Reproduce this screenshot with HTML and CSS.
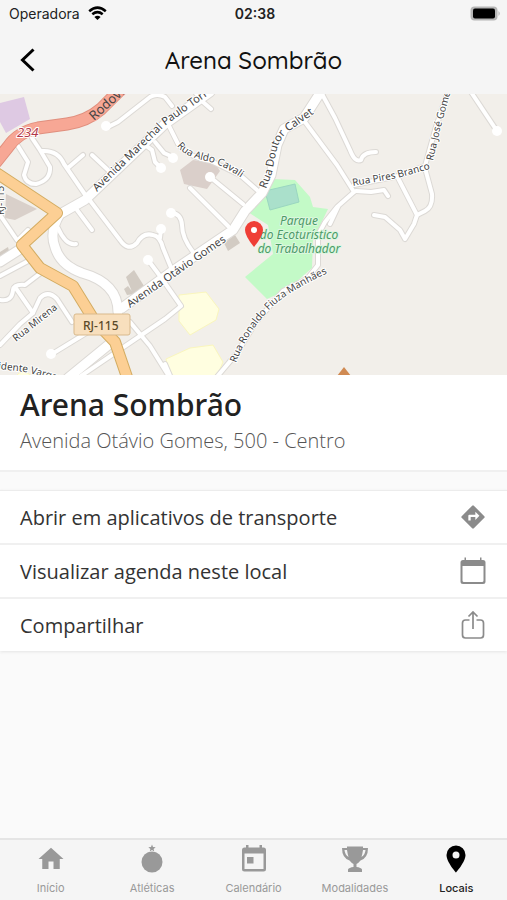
FILE: index.html
```
<!DOCTYPE html>
<html lang="pt-BR">
  <head>
    <meta charset="utf-8">
    <meta name="viewport" content="width=device-width, initial-scale=1">
    <title>Arena Sombrão</title>
    <link rel="stylesheet" href="styles.css">
  </head>
  <body>
    <div class="status">
      <div class="carrier">
        <span>Operadora</span>
        <svg width="19" height="15" viewBox="0 0 19 15" fill="none" stroke="#000" stroke-width="2.5">
          <path d="M1.2 5.2Q9.500-2 17.800 5.200M4.300 8.300Q9.500 4 14.700 8.300"/>
          <path d="M9.500 14L6.400 10.900Q9.500 8.400 12.600 10.900Z" fill="#000" stroke="none"/>
        </svg>
      </div>
      <time class="clock">02:38</time>
      <svg class="battery" width="31" height="15" viewBox="0 0 31 15">
        <rect x="0.500" y="0.500" width="27" height="14" rx="4" fill="#b5b5b5"/>
        <path d="M28.500 5Q31 7.500 28.500 10Z" fill="#b5b5b5"/>
        <rect x="3" y="2.500" width="22" height="10" rx="2" fill="#000"/>
      </svg>
    </div>

    <header class="header">
      <button class="back" aria-label="Voltar">
        <svg width="16" height="24" viewBox="0 0 16 24" fill="none" stroke="#000" stroke-width="3"><path d="M13.500 1.500L2.500 12L13.500 22.500"/></svg>
      </button>
      <h1 class="header_title">Arena Sombrão</h1>
    </header>

    <main class="content">
      <svg class="map" viewBox="0 94 507 281" role="img" aria-label="Mapa do local">
        <defs>
          <g id="small_roads">
            <path d="M108 127L118 122L150 97Q157 93 165 97L172 106M195 92L203 102L211 109"/>
            <path d="M18 146L28 162L24 175Q26 184 36 184Q51 180 50 167L40 150L32 138"/>
            <path d="M42 151Q58 150 64 164L86 196M69 167L83 155M92 155L108 170"/>
            <path d="M145 145L152 150L155 162L161 168M155 142L164 153L173 157"/>
            <path d="M168 124L178 144Q190 158 211 161L240 175L257 190M210 177L243 204M190 188L228 226"/>
            <path d="M88 198L120 240Q128 252 137 243Q143 232 153 235Q160 236 163 248L172 270M161 229L160 238"/>
            <path d="M171 213Q181 213 182 225Q182 238 193 252M77 210L92 230M58 228Q66 246 76 244"/>
            <path d="M148 260L160 276L181 306L165 319L78 378M130 322L150 346L170 378M52 354L88 332"/>
            <path d="M0 276L30 260M0 300Q12 302 13 290Q14 284 25 285L42 272M15 287L33 313"/>
            <path d="M0 345L20 324L33 313L40 298Q48 290 57 299L72 322M0 215L17 240M18 240L28 230"/>
            <path d="M322 94L335 118L350 150Q355 163 361 160Q363 152 376 152"/>
            <path d="M305 122L337 165L354 192"/>
            <path d="M356 191L371 192L384 190L388 196M354 185L398 176L425 166L435 130L447 94"/>
            <path d="M398 178L417 215L414 224L405 239L400 230L385 217L374 215"/>
            <path d="M425 168L432 194Q433 207 425 211L417 215M471 92L497 131"/>
            <path d="M354 192L337 207L325 222L318 235L318 265L307 279L283 291L256 322L237 353L216 378M338 207L330 224"/>
            <path d="M165 364L171 378"/>
          </g>
          <g id="big_roads">
            <path d="M62 213L85 200L165 124L210 92"/>
            <path d="M60 214Q49 232 55 247Q60 265 82 273Q118 283 118 312"/>
            <path d="M322 90L304 118L284 129L277 145L271 175L262 193L245 211L233 230L174 270L122 308M112 342L68 378"/>
            <path d="M0 262L22 248"/>
          </g>
          <path id="orange_road" d="M-2 174L57 213L22 245L40 268L73 286L94 320L115 342L128 380"/>
          <path id="red_road" d="M124 86L101 109Q87 121 67 124L38 128Q18 132 8 147L-4 162"/>
          <path id="t_rodovia" d="M94 121L154 67"/>
          <path id="t_marechal" d="M97 192L166 125L214 91L254 66"/>
          <path id="t_aldo" d="M177 146Q185 157 207 161Q225 165 252 186"/>
          <path id="t_calvet" d="M266 189L272 173L276 153Q279 138 289 131L322 108"/>
          <path id="t_otavio" d="M130 308L238 233"/>
          <path id="t_pires" d="M353 186L398 178L440 166"/>
          <path id="t_jose" d="M433 161L440 130L458 65"/>
          <path id="t_mirena" d="M16 342L66 302"/>
          <path id="t_ronaldo" d="M236 363Q247 332 273 306Q291 290 330 272"/>
          <path id="t_presidente" d="M-2 369L25 372L70 384"/>
        </defs>
        <rect y="94" width="507" height="281" fill="#f2efea"/>

        <path d="M0 103L24 97L30 119L6 133L0 122Z" fill="#dec9e3"/>
        <path d="M6 194L37 209L15 220L5 218Z" fill="#d9d0ca"/>
        <path d="M179 295L206 292L219 309L216 320L190 335L179 321ZM166 359L190 348L213 345L223 362L217 376L170 376ZM16 376Q22 368 32 376Z" fill="#fffee0" stroke="#faf6bd"/>
        <path d="M180 170L193 160L215 163L220 171L207 189L184 184Z" fill="#dacfca"/>
        <path d="M126 277L134 270L144 286L133 294ZM124 289L128 286L134 294L127 295ZM224 243L235 235L240 243L228 251ZM0 252L8 247L9 251L0 258Z" fill="#d2cbc3"/>
        <path d="M273 179L295 180L310 197L313 207L328 209L313 240L312 268L287 290L267 299L245 277L273 254L268 225L248 212L266 190Z" fill="#c3fac7"/>
        <path d="M265 191L295 184L299 202L270 210Z" fill="#aae0cb" stroke="#9ad6c0"/>

        <use href="#small_roads" class="casing small_case"/>
        <use href="#big_roads" class="casing big_case"/>
        <use href="#small_roads" class="road small_fill"/>
        <use href="#big_roads" class="road big_fill"/>
        <g fill="#fff">
          <circle cx="106" cy="126" r="5"/>
          <circle cx="161" cy="168" r="5"/>
          <circle cx="173" cy="158" r="5"/>
          <circle cx="148" cy="260" r="5"/>
          <circle cx="51" cy="354" r="5"/>
          <circle cx="497" cy="131" r="5"/>
          <circle cx="161" cy="229" r="5"/>
          <circle cx="171" cy="213" r="5"/>
          <circle cx="210" cy="177" r="5"/>
        </g>
        <use href="#red_road" class="road red_case"/>
        <use href="#red_road" class="road red_fill"/>
        <use href="#orange_road" class="road orange_case"/>
        <use href="#orange_road" class="road orange_fill"/>

        <g class="street">
          <text class="street_big"><textPath href="#t_rodovia">Rodovia</textPath></text>
          <text><textPath href="#t_marechal">Avenida Marechal Paulo Torres</textPath></text>
          <text class="street_small"><textPath href="#t_aldo">Rua Aldo Cavali</textPath></text>
          <text><textPath href="#t_calvet">Rua Doutor Calvet</textPath></text>
          <text><textPath href="#t_otavio">Avenida Otávio Gomes</textPath></text>
          <text class="street_small"><textPath href="#t_pires">Rua Pires Branco</textPath></text>
          <text class="street_small"><textPath href="#t_jose">Rua José Gomes</textPath></text>
          <text class="street_small"><textPath href="#t_mirena">Rua Mirena</textPath></text>
          <text class="street_small"><textPath href="#t_ronaldo">Rua Ronaldo Fiuza Manhães</textPath></text>
          <text class="street_small"><textPath href="#t_presidente">idente Vargas</textPath></text>
          <text class="street_small" transform="translate(4 215) rotate(-90)">RJ-115</text>
        </g>
        <text class="road_number" x="17" y="137">234</text>
        <rect x="74" y="314" width="56" height="21" rx="2" fill="#f8dfbd" stroke="#d9b98c"/>
        <text class="road_ref" x="83" y="330">RJ-115</text>
        <g class="park">
          <text x="299" y="225">Parque</text>
          <text x="299" y="239">do Ecoturístico</text>
          <text x="299" y="253">do Trabalhador</text>
        </g>
        <path d="M344 367L351 376H337Z" fill="#d08a52"/>
        <path d="M254 247Q245 236 245 230A9 9 0 0 1 263 230Q263 236 254 247Z" fill="#ef3e36"/>
        <circle cx="254" cy="230" r="3" fill="#fff"/>
      </svg>

      <section class="place">
        <h2 class="place_name">Arena Sombrão</h2>
        <p class="place_address">Avenida Otávio Gomes, 500 - Centro</p>
      </section>

      <div class="actions">
        <button class="action">
          <span>Abrir em aplicativos de transporte</span>
          <svg width="28" height="28" viewBox="0 0 24 24" fill="#8b8b8b"><path d="M21.710 11.290l-9-9a1 1 0 0 0-1.410 0l-9 9a1 1 0 0 0 0 1.410l9 9a1 1 0 0 0 1.410 0l9-9a1 1 0 0 0 0-1.410zM14 14.500V12h-4v3H8v-4a1 1 0 0 1 1-1h5V7.500l3.500 3.500z"/></svg>
        </button>
        <button class="action">
          <span>Visualizar agenda neste local</span>
          <svg width="28" height="28" viewBox="0 0 28 28" fill="#8b8b8b"><path d="M5.500 0.500h1.500V3h14V0.500h1.500V3H24a2.500 2.500 0 0 1 2.500 2.500v19A2.500 2.500 0 0 1 24 27H4a2.500 2.500 0 0 1-2.500-2.500v-19A2.500 2.500 0 0 1 4 3h1.500zM3.500 9v14.500a1.500 1.500 0 0 0 1.500 1.500h18a1.500 1.500 0 0 0 1.500-1.500V9z"/></svg>
        </button>
        <button class="action">
          <span>Compartilhar</span>
          <svg width="28" height="28" viewBox="0 0 28 28" fill="none" stroke="#8b8b8b" stroke-width="1.700"><path d="M10.500 9H6.500A3 3 0 0 0 3.500 12v12a3 3 0 0 0 3 3h15a3 3 0 0 0 3-3V12a3 3 0 0 0-3-3h-4M14 18V1.500M9.500 5.500L14 1l4.500 4.500"/></svg>
        </button>
      </div>
    </main>

    <nav class="tabs">
      <a class="tab" href="#inicio">
        <svg width="30" height="30" viewBox="0 0 24 24"><path d="M10 20v-6h4v6h5v-8h3L12 3 2 12h3v8z"/></svg>
        <span>Início</span>
      </a>
      <a class="tab" href="#atleticas">
        <svg width="30" height="30" viewBox="0 0 30 30"><circle cx="15" cy="18" r="10.500"/><path d="M15 0.500l1 2.500 2.700.200-2.100 1.700.700 2.600-2.300-1.400-2.300 1.400.700-2.600-2.100-1.700L14 3z"/></svg>
        <span>Atléticas</span>
      </a>
      <a class="tab" href="#calendario">
        <svg width="30" height="30" viewBox="0 0 30 30"><path d="M7 1h2.500v2.500h11V1H23v2.500h1.500A2.500 2.500 0 0 1 27 6v19a2.500 2.500 0 0 1-2.500 2.500h-19A2.500 2.500 0 0 1 3 25V6a2.500 2.500 0 0 1 2.500-2.500H7zM5.500 9.500V25h19V9.500zM8 13h6.500v6.500H8z"/></svg>
        <span>Calendário</span>
      </a>
      <a class="tab" href="#modalidades">
        <svg width="30" height="30" viewBox="0 0 30 30"><path fill-rule="evenodd" d="M7 2.500h16v1.500h5q0 10-7.500 12.500-2 2.500-4 3.500v3q4.500.500 5.500 2.500V28H8v-2.500q1-2 5.500-2.500v-3q-2-1-4-3.500Q2 14 2 4h5zM4.500 6q.500 5 4 7Q7.500 9.500 7 6zM25.500 6H23q-.500 3.500-1.500 7 3.500-2 4-7z"/></svg>
        <span>Modalidades</span>
      </a>
      <a class="tab tab_on" href="#locais" aria-current="page">
        <svg width="30" height="30" viewBox="0 0 30 30"><path d="M15 1.500a9.500 9.500 0 0 0-9.500 9.500c0 7 9.500 17.500 9.500 17.500s9.500-10.500 9.500-17.500A9.500 9.500 0 0 0 15 1.500zM15 7.500a3.500 3.500 0 1 1 0 7 3.500 3.500 0 0 1 0-7z"/></svg>
        <span>Locais</span>
      </a>
    </nav>
  </body>
</html>
```
FILE: styles.css
```
* { box-sizing: border-box; }
body {
  margin: 0;
  min-height: 100vh;
  display: flex;
  flex-direction: column;
  background-color: #fafafa;
  color: #222;
  font-family: "Open Sans", "Noto Sans", sans-serif;
}
h1, h2, p { margin: 0; }
button {
  border: none;
  background: none;
  color: inherit;
  font-family: inherit;
  cursor: pointer;
}
.status {
  display: grid;
  grid-template-columns: 1fr auto 1fr;
  align-items: center;
  height: 28px;
  padding: 0 6px 2px 9px;
  background-color: #f5f5f5;
  font-family: Inter, sans-serif;
  font-size: 14px;
}
.carrier {
  display: flex;
  align-items: center;
  gap: 8px;
}
.clock { font-weight: 600; }
.battery { justify-self: end; }
.header {
  display: grid;
  grid-template-columns: 56px 1fr 56px;
  align-items: center;
  height: 66px;
  padding-bottom: 2px;
  background-color: #f5f5f5;
}
.back {
  height: 44px;
  padding: 0;
}
.back svg { display: block; margin: 0 auto; }
.header_title {
  color: #111;
  font-family: Quicksand, Lato, sans-serif;
  font-size: 24px;
  font-weight: 500;
  line-height: 32px;
  text-align: center;
}
.content { flex: 1; }

/* map */
.map {
  display: block;
  width: 100%;
}
.casing, .road {
  fill: none;
  stroke-linecap: round;
  stroke-linejoin: round;
}
.casing { stroke: #dcd9d5; }
.road { stroke: #fff; }
.small_case { stroke-width: 6px; }
.small_fill { stroke-width: 4px; }
.big_case { stroke-width: 11px; }
.big_fill { stroke-width: 9px; }
.red_case { stroke: #e08f7e; stroke-width: 13px; }
.red_fill { stroke: #f7a795; stroke-width: 11px; }
.orange_case { stroke: #d3ac62; stroke-width: 12px; }
.orange_fill { stroke: #fccf94; stroke-width: 10px; }
.street text, .park, .road_number {
  font-family: "Noto Sans", sans-serif;
  stroke: #fff;
  stroke-width: 2px;
  paint-order: stroke;
  stroke-linejoin: round;
}
.street text { fill: #444; font-size: 11px; }
.street .street_small { font-size: 10px; }
.street .street_big { font-size: 13px; stroke: #f7a795; }
.road_number { fill: #b3394b; font-size: 13px; font-style: italic; }
.road_ref { fill: #5c4b2a; font-family: "Noto Sans", sans-serif; font-size: 12px; font-weight: 500; }
.park {
  fill: #4c9a68;
  stroke: #dcf7df;
  font-size: 12px;
  font-style: italic;
  text-anchor: middle;
}

.place {
  padding: 10px 20px 15px;
  background-color: #fff;
  border-bottom: 2px solid #f0f0f0;
}
.place_name {
  margin-bottom: 2px;
  font-family: "Noto Sans", "Open Sans", sans-serif;
  font-size: 30px;
  font-weight: 500;
  line-height: 40px;
}
.place_address {
  color: #555;
  font-size: 20px;
  font-weight: 300;
  line-height: 28px;
}
.actions {
  margin-top: 18px;
  border-top: 1px solid #ececec;
  background-color: #fff;
  box-shadow: 0 1px 3px #e4e4e4;
}
.action {
  display: flex;
  align-items: center;
  justify-content: space-between;
  width: 100%;
  height: 54px;
  padding: 0 20px;
  border-bottom: 2px solid #f0f0f0;
  color: #333;
  font-size: 20px;
  text-align: left;
}
.action:last-child { height: 52px; border-bottom: none; }

/* bottom bar */
.tabs {
  display: flex;
  height: 62px;
  border-top: 2px solid #e5e5e5;
  background-color: #f5f5f5;
}
.tab {
  flex: 1;
  display: flex;
  flex-direction: column;
  align-items: center;
  gap: 6px;
  padding-top: 4px;
  color: #999;
  fill: #999;
  font-family: Inter, sans-serif;
  font-size: 11px;
  line-height: 16px;
  text-decoration: none;
}
.tab_on { color: #222; fill: #000; font-weight: 500; }
```
